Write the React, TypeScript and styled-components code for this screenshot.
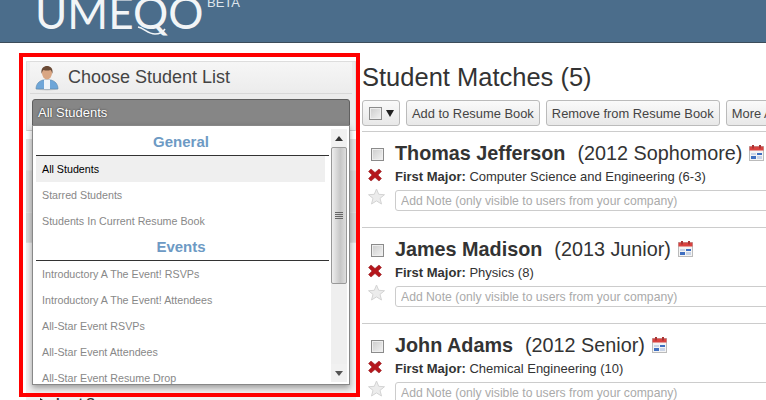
import styled, {createGlobalStyle} from 'styled-components'

const GlobalStyle = createGlobalStyle`
  html, body {
    margin: 0;
    padding: 0;
    width: 766px;
    height: 400px;
    overflow: hidden;
    background: #fff;
    font-family: "Liberation Sans", Arial, sans-serif;
    color: #333;
  }
`

const Page = styled.div`
  width: 766px;
  height: 400px;
  overflow: hidden;
`

const Header = styled.header`
  height: 42px;
  background: #4b6d8b;
  border-bottom: 1px solid #3c4c5a;
  padding-left: 35px;
  display: flex;
  align-items: flex-start;
  overflow: hidden;
`

const Logo = styled.div`
  position: relative;
  flex: none;
  height: 42px;
  width: 165px;
  margin-top: -9px;
  font-family: Lato, "Open Sans", sans-serif;
  font-weight: 400;
  font-size: 44px;
  line-height: 42px;
  color: #f2f5f7;
  white-space: nowrap;
`

const LogoTail = styled.svg`
  position: absolute;
  left: 102px;
  top: 35px;
`

const Beta = styled.span`
  flex: none;
  font-size: 13px;
  line-height: 12px;
  color: #dfe6ec;
  margin: -3px 0 0 7px;
`

const Body = styled.main`
  display: flex;
  padding-top: 10px;
`

const Sidebar = styled.aside`
  position: relative;
  flex: none;
  width: 341px;
  margin-left: 19px;
  padding: 8px 4px 0 7px;
  box-sizing: border-box;
`

const RedFrame = styled.div`
  position: absolute;
  left: 0;
  top: 0;
  width: 341px;
  height: 344px;
  border: 4px solid #f00;
  box-sizing: border-box;
  pointer-events: none;
  z-index: 3;
`

const Panel = styled.section`
  position: relative;
  border: 1px solid #ddd;
  border-bottom-color: #ccc;
  background: #ececec;
  height: 70px;
  box-sizing: border-box;
`

const PanelTitle = styled.div`
  display: flex;
  align-items: center;
  gap: 9px;
  height: 31px;
  margin: 0 3px;
  padding-left: 5px;
  border-bottom: 1px solid #d8d8d8;
  font-size: 18px;
  color: #444;
  background: linear-gradient(#f6f6f6, #ececec);
`

const SelectBox = styled.div`
  position: absolute;
  left: 5px;
  top: 37px;
  width: 318px;
  height: 27px;
  box-sizing: border-box;
  border: 1px solid #5f5f5f;
  border-radius: 3px 3px 0 0;
  background: #868686;
  color: #fff;
  font-size: 13px;
  line-height: 25px;
  padding-left: 5px;
  text-shadow: 0 0 2px #222;
`

const Dropdown = styled.div`
  position: absolute;
  left: 5px;
  top: 63px;
  width: 318px;
  height: 260px;
  box-sizing: border-box;
  background: #fff;
  border: 1px solid #888;
  box-shadow: 0 3px 6px rgba(0, 0, 0, 0.35);
  z-index: 2;
  display: flex;
  overflow: hidden;
`

const ListArea = styled.div`
  flex: none;
  width: 293px;
  margin: 3px 0 0 3px;
`

const GroupTitle = styled.div`
  height: 26px;
  line-height: 25px;
  padding-right: 3px;
  text-align: center;
  font-size: 15px;
  font-weight: 700;
  color: #6d9ac4;
  border-bottom: 1px solid #333;
`

const Item = styled.div<{$selected?: boolean}>`
  height: 26px;
  width: 289px;
  line-height: 26px;
  padding-left: 6px;
  box-sizing: border-box;
  font-size: 10.7px;
  color: ${({$selected}) => ($selected ? '#000' : '#888')};
  background: ${({$selected}) => ($selected ? '#efefef' : 'transparent')};
  white-space: nowrap;
`

const Scrollbar = styled.div`
  flex: none;
  width: 16px;
  margin: 3px 0 2px 2px;
  background: #efefef;
  display: flex;
  flex-direction: column;
  align-items: stretch;
`

const ScrollButton = styled.div`
  flex: none;
  height: 18px;
  display: flex;
  align-items: center;
  justify-content: center;
  background: #f1f1f1;
`

const Thumb = styled.div`
  flex: none;
  height: 137px;
  box-sizing: border-box;
  border: 1px solid #999;
  border-radius: 2px;
  background: linear-gradient(90deg, #eee, #c6c6c6 60%, #ddd);
  display: flex;
  align-items: center;
  justify-content: center;
`

const Track = styled.div`
  flex: 1;
`

const SideRow = styled.div<{$shade: string; $height: number}>`
  height: ${({$height}) => $height}px;
  background: ${({$shade}) => $shade};
  border-bottom: 1px solid #ddd;
  box-sizing: border-box;
`

const SideRows = styled.div`
  margin-top: 8px;
`

const LastScores = styled.div`
  display: flex;
  align-items: center;
  gap: 10px;
  height: 16px;
  padding-left: 14px;
  font-size: 13px;
  font-weight: 700;
  color: #333;
  background: #f2f2f2;
`

const Content = styled.div`
  flex: none;
  width: 420px;
  padding: 0 0 0 2px;
  box-sizing: border-box;
`

const Title = styled.h1`
  margin: 0;
  height: 47px;
  line-height: 48px;
  font-size: 25.5px;
  font-weight: 400;
  color: #333;
`

const Toolbar = styled.div`
  display: flex;
  gap: 6px;
  height: 26px;
  white-space: nowrap;
`

const ToolButton = styled.div`
  flex: none;
  height: 26px;
  box-sizing: border-box;
  padding: 0 5px;
  display: flex;
  align-items: center;
  gap: 4px;
  font-size: 12.9px;
  color: #444;
  border: 1px solid #bbb;
  border-radius: 3px;
  background: linear-gradient(#fafafa, #e8e8e8);

  &:first-child {
    padding-left: 6px;
  }
`

const Caret = styled.span`
  width: 0;
  height: 0;
  border-left: 4px solid transparent;
  border-right: 4px solid transparent;
  border-top: 7px solid #222;
`

const Check = styled.span`
  display: block;
  flex: none;
  width: 13px;
  height: 13px;
  box-sizing: border-box;
  border: 1px solid #8b8b8b;
  box-shadow: inset 0 0 0 1px #eee;
  background: linear-gradient(135deg, #ccc, #f2f2f2);
`

const Student = styled.article`
  display: flex;
  height: 96px;
  box-sizing: border-box;
  border-top: 1px solid #ccc;
  margin-top: 5px;
  margin-bottom: -5px;
  padding: 7px 0 0 6px;
`

const SideIcons = styled.div`
  flex: none;
  width: 27px;
  display: flex;
  flex-direction: column;
  align-items: flex-start;
`

const CheckSlot = styled.div`
  height: 29px;
  padding: 9px 0 0 3px;
  box-sizing: border-box;
`

const IconSlot = styled.div`
  height: 20px;
`

const Info = styled.div`
  flex: 1;
  min-width: 0;
`

const NameLine = styled.div`
  display: flex;
  align-items: center;
  height: 28px;
  font-size: 19.8px;
  white-space: nowrap;
  color: #333;

  strong {
    font-weight: 700;
    margin-right: 12px;
  }
`

const CalendarIcon = styled.svg`
  margin-left: 7px;
  flex: none;
`

const Major = styled.div`
  height: 18px;
  margin-top: 1px;
  line-height: 18px;
  font-size: 13px;
  color: #333;
  white-space: nowrap;

  b {
    font-weight: 700;
  }
`

const NoteInput = styled.input`
  display: block;
  width: 400px;
  height: 21px;
  margin-top: 4px;
  box-sizing: border-box;
  border: 1px solid #ccc;
  border-radius: 3px;
  padding: 0 5px;
  font: 12.2px "Liberation Sans", Arial, sans-serif;

  &::placeholder {
    color: #aaa;
    opacity: 1;
  }
`

const UserIcon = () => (
  <svg width="24" height="26" viewBox="0 0 24 26">
    <ellipse cx="12" cy="24" rx="11" ry="1.5" fill="#ccc" />
    <path d="M1 24c0-5 3-8 7-9h8c4 1 7 4 7 9z" fill="#6ea6d8" stroke="#5b86aa" strokeWidth="0.6" />
    <path d="M9 15h6v9H9z" fill="#eef4f8" />
    <ellipse cx="12" cy="8" rx="5" ry="6.5" fill="#d9a683" />
    <path d="M6.600 9C5.500 3 9 1 12 1s6.500 2 5.400 8c-.5-2-1-3.500-2-4-2 .8-5 .8-6.800 0-1 .5-1.500 2-2 4z" fill="#6a4a36" />
  </svg>
)

const CrossIcon = () => (
  <svg width="14" height="14" viewBox="0 0 14 14">
    <path d="M3 1l4 3.500L11 1l2.500 2.500L10 7l3.500 3.500L11 13 7 9.500 3 13 .5 10.500 4 7 .5 3.500z" fill="#b5161c" stroke="#8e1c1f" strokeWidth="0.5" />
  </svg>
)

const StarIcon = () => (
  <svg width="17" height="17" viewBox="0 0 17 17">
    <path d="M8.500 1l2.200 5.300 5.800.4-4.500 3.700 1.500 5.600-5-3.100-5 3.100 1.500-5.600L.500 6.700l5.800-.4z" fill="#ececec" stroke="#d4d4d4" />
  </svg>
)

const Calendar = () => (
  <CalendarIcon width="15" height="16" viewBox="0 0 15 16">
    <rect x="0.500" y="1.500" width="14" height="14" fill="#f4f4f4" stroke="#bbb" />
    <rect x="0.500" y="1.500" width="14" height="4" fill="#d9423f" />
    <rect x="3" y="0" width="2" height="3.500" fill="#a33" />
    <rect x="10" y="0" width="2" height="3.500" fill="#a33" />
    <rect x="2" y="8" width="5" height="2" fill="#c9d4e6" />
    <rect x="8" y="8" width="5" height="2" fill="#3f6fc0" />
    <rect x="2" y="11" width="5" height="3" fill="#3f6fc0" />
    <rect x="8" y="11" width="5" height="3" fill="#c9d4e6" />
  </CalendarIcon>
)

const generalItems = ['All Students', 'Starred Students', 'Students In Current Resume Book']
const eventItems = [
  'Introductory A The Event! RSVPs',
  'Introductory A The Event! Attendees',
  'All-Star Event RSVPs',
  'All-Star Event Attendees',
  'All-Star Event Resume Drop',
]

const students = [
  {name: 'Thomas Jefferson', year: '(2012 Sophomore)', major: 'Computer Science and Engineering (6-3)'},
  {name: 'James Madison', year: '(2013 Junior)', major: 'Physics (8)'},
  {name: 'John Adams', year: '(2012 Senior)', major: 'Chemical Engineering (10)'},
]

export default function App() {
  return (
    <Page>
      <GlobalStyle />
      <Header>
        <Logo>
          UMEQO
          <LogoTail width="40" height="12" viewBox="0 0 40 12">
            <path d="M1 1c6 1 10 7 17 7 5 0 8-2 10-5" fill="none" stroke="#f2f5f7" strokeWidth="1.500" />
          </LogoTail>
        </Logo>
        <Beta>BETA</Beta>
      </Header>
      <Body>
        <Sidebar>
          <RedFrame />
          <Panel>
            <PanelTitle>
              <UserIcon />
              Choose Student List
            </PanelTitle>
            <SelectBox>All Students</SelectBox>
            <Dropdown>
              <ListArea>
                <GroupTitle>General</GroupTitle>
                {generalItems.map((item, i) => (
                  <Item key={item} $selected={i === 0}>{item}</Item>
                ))}
                <GroupTitle>Events</GroupTitle>
                {eventItems.map((item) => (
                  <Item key={item}>{item}</Item>
                ))}
              </ListArea>
              <Scrollbar>
                <ScrollButton>
                  <svg width="8" height="5" viewBox="0 0 8 5"><path d="M4 0l4 5H0z" fill="#333" /></svg>
                </ScrollButton>
                <Thumb>
                  <svg width="8" height="8" viewBox="0 0 8 8">
                    <path d="M0 .5h8M0 2.500h8M0 4.500h8M0 6.500h8" stroke="#666" />
                  </svg>
                </Thumb>
                <Track />
                <ScrollButton>
                  <svg width="8" height="5" viewBox="0 0 8 5"><path d="M0 0h8L4 5z" fill="#555" /></svg>
                </ScrollButton>
              </Scrollbar>
            </Dropdown>
          </Panel>
          <SideRows>
            <SideRow $shade="#e4e4e4" $height={32} />
            <SideRow $shade="#d8d8d8" $height={42} />
            <SideRow $shade="#d4d4d4" $height={30} />
            <SideRow $shade="#f1f1f1" $height={151} />
            <LastScores>
              <svg width="6" height="8" viewBox="0 0 6 8"><path d="M0 0l6 4-6 4z" fill="#222" /></svg>
              Last Scores
            </LastScores>
          </SideRows>
        </Sidebar>
        <Content>
          <Title>Student Matches (5)</Title>
          <Toolbar>
            <ToolButton>
              <Check />
              <Caret />
            </ToolButton>
            <ToolButton>Add to Resume Book</ToolButton>
            <ToolButton>Remove from Resume Book</ToolButton>
            <ToolButton>More Actions</ToolButton>
          </Toolbar>
          {students.map((s) => (
            <Student key={s.name}>
              <SideIcons>
                <CheckSlot><Check /></CheckSlot>
                <IconSlot><CrossIcon /></IconSlot>
                <IconSlot><StarIcon /></IconSlot>
              </SideIcons>
              <Info>
                <NameLine>
                  <strong>{s.name}</strong>
                  {s.year}
                  <Calendar />
                </NameLine>
                <Major><b>First Major:</b> {s.major}</Major>
                <NoteInput readOnly placeholder="Add Note (only visible to users from your company)" />
              </Info>
            </Student>
          ))}
        </Content>
      </Body>
    </Page>
  )
}
